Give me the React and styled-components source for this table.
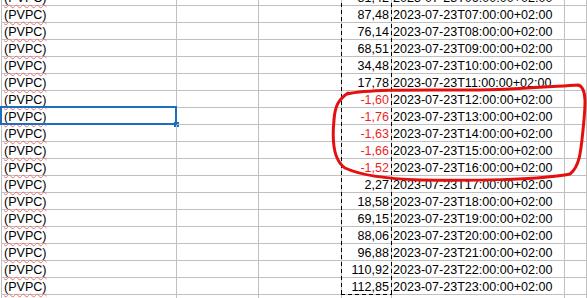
import React from "react";
import styled, { createGlobalStyle, css } from "styled-components";

const GRID = "#c0c0c0";
const COLS = [176, 82, 83, 50, 173];
const ROW_H = 17;

const GlobalStyle = createGlobalStyle`
  html, body { margin: 0; padding: 0; background: #fff; }
  body { font-family: "Liberation Sans", Arial, sans-serif; }
`;

const Sheet = styled.div`
  position: relative;
  width: 587px;
  height: 298px;
  overflow: hidden;
  background: #fff;
`;

const Grid = styled.div`
  position: relative;
  margin-top: -11px;
  padding-left: 1px;
`;

const Row = styled.div`
  display: grid;
  grid-template-columns: ${COLS.map((c) => `${c}px`).join(" ")} 1fr;
  height: ${ROW_H}px;
`;

const Cell = styled.div`
  position: relative;
  box-sizing: border-box;
  height: ${ROW_H}px;
  border-right: 1px solid ${GRID};
  border-bottom: 1px solid ${GRID};
  font-size: 12.55px;
  line-height: 19px;
  color: #000;
  white-space: nowrap;
  ${(p) => p.$first && css`border-left: 1px solid ${GRID};`}
  ${(p) =>
    p.$align === "right"
      ? css`text-align: right; padding-right: 2px;`
      : css`text-align: left; padding-left: ${p.$pad ?? 2}px;`}
  ${(p) => p.$negative && css`color: #ec1f1f;`}
`;

const Spelled = styled.span`
  text-decoration: underline wavy #e87070;
  text-decoration-thickness: 1px;
  text-underline-offset: 2px;
  text-decoration-skip-ink: none;
`;

const CellCursor = styled.div`
  position: absolute;
  top: -2px;
  left: -2px;
  right: -1px;
  bottom: -1px;
  border: 2px solid #1b6ec2;
  pointer-events: none;
`;

const FillHandle = styled.div`
  position: absolute;
  right: -4px;
  bottom: -4px;
  width: 5px;
  height: 5px;
  background: #1b6ec2;
`;

const dash = (dir) =>
  `repeating-linear-gradient(${dir}, #000 0 4px, transparent 4px 7px)`;

const CopyMarquee = styled.div`
  position: absolute;
  top: 0;
  left: ${(p) => p.$left}px;
  width: ${(p) => p.$width}px;
  height: ${(p) => p.$height}px;
  pointer-events: none;
  background:
    ${dash("to bottom")} left top / 1px 100% no-repeat,
    ${dash("to bottom")} right top / 1px 100% no-repeat,
    ${dash("to right")} left bottom / 100% 1px no-repeat;
`;

const Annotation = styled.svg`
  position: absolute;
  left: 0;
  top: 0;
  width: 587px;
  height: 298px;
  pointer-events: none;
`;

const data = [
  ["81,42", "06"],
  ["87,48", "07"],
  ["76,14", "08"],
  ["68,51", "09"],
  ["34,48", "10"],
  ["17,78", "11"],
  ["-1,60", "12"],
  ["-1,76", "13"],
  ["-1,63", "14"],
  ["-1,66", "15"],
  ["-1,52", "16"],
  ["2,27", "17"],
  ["18,58", "18"],
  ["69,15", "19"],
  ["88,06", "20"],
  ["96,88", "21"],
  ["110,92", "22"],
  ["112,85", "23"],
  ["113,40", "24"],
];

const SELECTED = "13";

export default function App() {
  const marqueeLeft = 1 + COLS[0] + COLS[1] + COLS[2] - 1;
  const marqueeWidth = COLS[3] + 1;
  const marqueeHeight = 18 * ROW_H;
  return (
    <>
      <GlobalStyle />
      <Sheet>
        <Grid>
          {data.map(([val, hour]) => {
            const date =
              hour === "24"
                ? "2023-07-24T00:00:00+02:00"
                : `2023-07-23T${hour}:00:00+02:00`;
            return (
              <Row key={hour}>
                <Cell $first>
                  <Spelled>(PVPC)</Spelled>
                  {hour === SELECTED && (
                    <CellCursor>
                      <FillHandle />
                    </CellCursor>
                  )}
                </Cell>
                <Cell />
                <Cell />
                <Cell $align="right" $negative={val.startsWith("-")}>
                  {val}
                </Cell>
                <Cell $pad={1}>{date}</Cell>
                <Cell />
              </Row>
            );
          })}
          <CopyMarquee
            $left={marqueeLeft}
            $width={marqueeWidth}
            $height={marqueeHeight}
          />
        </Grid>
        <Annotation viewBox="0 0 587 298">
          <path
            d="M 347 94 C 370 89, 420 90, 470 90 C 510 90, 545 87, 578 85 C 588 87, 585 110, 583 130 C 581 150, 580 166, 570 174 C 540 180, 470 181, 420 180 C 390 179, 362 176, 345 168 C 333 160, 332 140, 334 120 C 335 106, 338 100, 348 93"
            fill="none"
            stroke="#e41010"
            strokeWidth="3"
            strokeLinecap="round"
            strokeLinejoin="round"
          />
        </Annotation>
      </Sheet>
    </>
  );
}
